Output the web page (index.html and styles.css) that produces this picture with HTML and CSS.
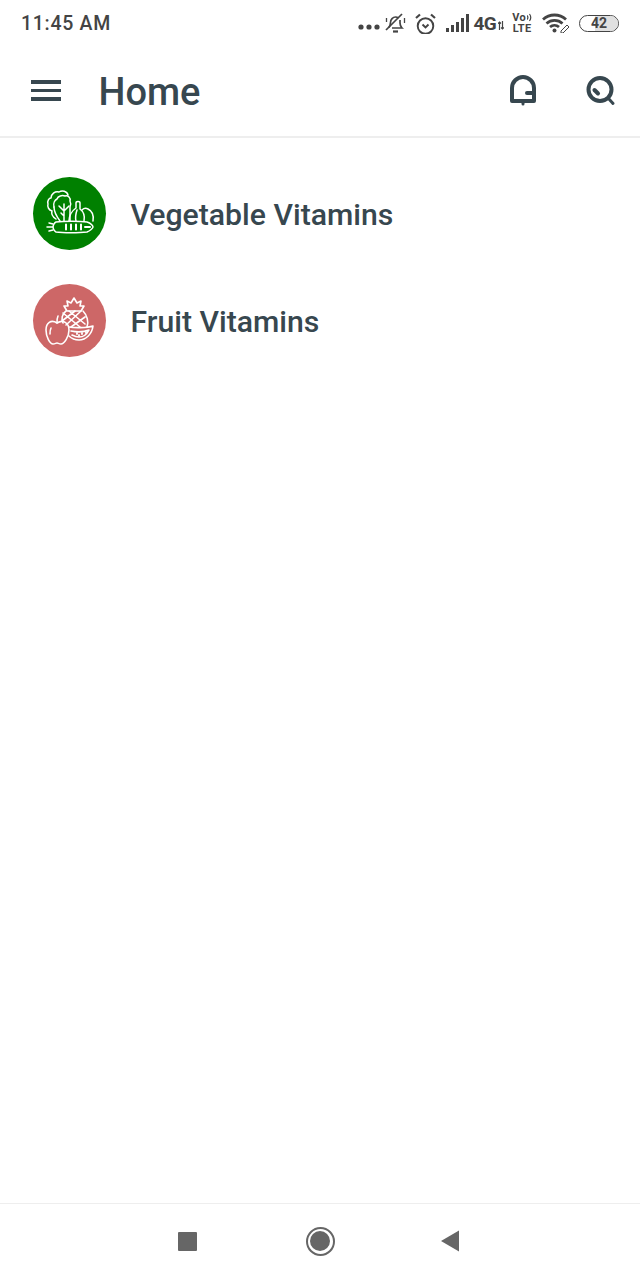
FILE: index.html
```html
<!DOCTYPE html>
<html lang="en">
<head>
<meta charset="utf-8">
<title>Home</title>
<link rel="stylesheet" href="styles.css">
</head>
<body>
<div class="screen">
  <div class="status">
    <span class="time">11:45 AM</span>
    <div class="status-icons">
      <svg class="s-dots" width="22" height="6" viewBox="0 0 22 6"><circle cx="3" cy="3" r="2.6"/><circle cx="11" cy="3" r="2.6"/><circle cx="19" cy="3" r="2.6"/></svg>
      <svg class="s-mute" width="21" height="20" viewBox="0 0 21 20" fill="none" stroke="#444" stroke-width="1.7"><path d="M1 17L17 1"/><path d="M4 14.500c1-2 1.500-3 1.500-5 0-3 2.500-5.500 5-5.500 1 0 2 .3 3 1M15 7v3c0 2 .5 3.500 2 5H7"/><path d="M8 18.500h5" stroke-width="2.200"/><path d="M1.500 5v4M19.500 5v5" stroke-width="1.300"/></svg>
      <svg class="s-alarm" width="21" height="21" viewBox="0 0 21 21" fill="none" stroke="#444" stroke-width="1.900"><circle cx="10.500" cy="13" r="7.800"/><path d="M7.500 11.500l3 3 3-3"/><path d="M1 5l4-3.500M20 5l-4-3.500" stroke-width="2.200"/></svg>
      <svg class="s-signal" width="23" height="18" viewBox="0 0 23 18" fill="#444"><rect x="0" y="14" width="3" height="4"/><rect x="5" y="11" width="3" height="7"/><rect x="10" y="8" width="3" height="10"/><rect x="15" y="4" width="3" height="14"/><rect x="20" y="0" width="3" height="18"/></svg>
      <span class="net">4G</span>
      <svg class="s-arrows" width="6" height="9" viewBox="0 0 6 9" fill="none" stroke="#444" stroke-width="1.200"><path d="M1.500 9V1M0 2.500L1.500 1 3 2.500M4.500 0v8M3 6.500L4.500 8 6 6.500"/></svg>
      <div class="volte">
        <div class="volte-top"><span>Vo</span><svg width="5" height="9" viewBox="0 0 5 9" fill="none" stroke="#444" stroke-width="1.200"><path d="M0 2.500a3 3 0 0 1 0 4M2.500 1a6 6 0 0 1 0 7"/></svg></div>
        <span>LTE</span>
      </div>
      <svg class="s-wifi" width="28" height="20" viewBox="0 0 28 20" fill="none" stroke="#444" stroke-width="2.800"><path d="M1 6.500a17 17 0 0 1 23 0M4.500 10.500a12 12 0 0 1 16 0M8 14a7 7 0 0 1 9 0"/><circle cx="12.500" cy="17.500" r="2" fill="#444" stroke="none"/><path d="M19 18l6-6 2 2-6 6h-2z" stroke-width="1"/></svg>
      <div class="battery"><span class="battery-fill"></span><span class="battery-level">42</span></div>
    </div>
  </div>

  <header class="topbar">
    <div class="menu"><span></span><span></span><span></span></div>
    <h1 class="title">Home</h1>
    <svg class="bell" width="30" height="32" viewBox="0 0 30 32" fill="none" stroke="#37474f" stroke-width="4" stroke-linecap="round" stroke-linejoin="round"><path d="M5 27V14a11 11 0 0 1 22 0v13z"/><path d="M20 19h7"/><path d="M16 28.500v1.500" stroke-width="3"/></svg>
    <svg class="search" width="32" height="32" viewBox="0 0 32 32" fill="none" stroke="#37474f" stroke-width="4" stroke-linecap="round"><circle cx="16" cy="15.500" r="11.500"/><path d="M10.500 16l3.500 3.500"/><path d="M24.500 24.500l4.500 5" stroke-width="3"/></svg>
  </header>

  <main class="list">
    <a class="item">
      <span class="badge badge-veg">
        <svg width="73" height="73" viewBox="0 0 73 73" fill="none" stroke="#fff" stroke-width="1.500" stroke-linecap="round" stroke-linejoin="round">
          <path d="M23 42c-3-2-5-5-4-8-3-1-5-4-4-7-1-3 1-6 3-6 0-4 4-7 8-6 3-2 8-1 9 3"/>
          <path d="M21 30c-1-4 1-7 3-8 1-3 5-4 8-3 3-1 6 2 5 5 1 2 1 4 0 6v14"/>
          <path d="M21 30c0 5 3 10 6 14"/>
          <path d="M31 44V27M31 34l-5-5M31 34l5-5M31 39l-3-3"/>
          <path d="M36 44c0-7 3-10 7-13v-5c0-2 4-2 4 0v6c4 3 5 7 4 12"/>
          <path d="M43 44c-1-4 0-8 1-11"/>
          <path d="M49 33c2-2 4-2 6-1 4 2 6 6 5 12"/>
          <path d="M23 45c8-1 24-1 31 0 4 1 6 4 6 5s-3 4-6 5c-8 1-24 1-31 0-2-1-3-4-3-5s1-4 3-5z"/>
          <path d="M20 50h-6M20 47l-4-1M20 53l-4 1"/>
          <path d="M33 47.500v5M38 47.500v5M43 47.500v5M48 47.500v5M52 50h5" stroke-width="2"/>
        </svg>
      </span>
      <span class="label">Vegetable Vitamins</span>
    </a>
    <a class="item">
      <span class="badge badge-fruit">
        <svg width="73" height="73" viewBox="0 0 73 73" fill="none" stroke="#fff" stroke-width="1.600" stroke-linecap="round" stroke-linejoin="round">
          <path d="M41 14l3 5 4-2-1 5 4 0-3 5H34l-3-5 4 0-1-5 4 2z"/>
          <path d="M33 27c-4 3-5 8-3 12M50 27c4 4 6 11 4 16M30 29l17 14M36 27l16 13M48 27L33 41M42 27L29 37M52 33l-14 10"/>
          <path d="M24 39c-6-4-11 0-11 7 0 7 4 14 7 14 2 0 3-1 4-1s2 1 4 1c3 0 8-7 8-14 0-7-6-11-12-7z"/>
          <path d="M24 39c0-3 0-5 1-7M18 44c-1 2-1 4-1 6"/>
          <path d="M36 43c5 1 18 1 24-1-1 8-7 14-14 14-3 0-7-1-10-4"/>
          <path d="M38 47c5 1 13 1 18-1-2 4-6 7-10 7-3 0-5-1-7-2"/>
          <path d="M44 49v1M49 49v1M46 51v1M53 48v1" stroke-width="1.800"/>
        </svg>
      </span>
      <span class="label">Fruit Vitamins</span>
    </a>
  </main>

  <footer class="navbar">
    <span class="nav-square"></span>
    <span class="nav-home"><span></span></span>
    <svg class="nav-back" width="20" height="22" viewBox="0 0 20 22"><path d="M1 11L19 .5v21z" fill="#666"/></svg>
  </footer>
</div>
</body>
</html>
```

FILE: styles.css
```css
* { box-sizing: border-box; }

body {
  margin: 0;
  background: #fff;
  font-family: Roboto, "Noto Sans", sans-serif;
}

.screen {
  display: flex;
  flex-direction: column;
  height: 1280px;
  width: 640px;
  overflow: hidden;
}

/* system status row */
.status {
  display: flex;
  align-items: center;
  justify-content: space-between;
  height: 46px;
  padding: 0 21px;
  color: #444;
}

.time {
  font-size: 19.500px;
  font-weight: 500;
  letter-spacing: 0.7px;
  color: #444;
}

.status-icons {
  display: flex;
  align-items: center;
  height: 46px;
  fill: #444;
}

.s-dots { margin-top: 8px; }
.s-mute { margin-left: 5px; }
.s-alarm { margin-left: 9px; }
.s-signal { margin-left: 10px; margin-top: -1px; }

.net {
  margin-left: 4px;
  font-size: 19px;
  font-weight: 700;
  letter-spacing: -0.5px;
}

.s-arrows { margin-left: 2px; margin-top: 4px; }

.volte {
  display: flex;
  flex-direction: column;
  align-items: center;
  margin-left: 8px;
  font-size: 11px;
  font-weight: 700;
  letter-spacing: 0.3px;
  line-height: 11px;
}

.volte-top {
  display: flex;
  align-items: center;
  gap: 1px;
}

.s-wifi { margin-left: 10px; }

.battery {
  position: relative;
  display: flex;
  align-items: center;
  justify-content: center;
  width: 40px;
  height: 17px;
  margin-left: 9px;
  border: 1.500px solid #444;
  border-radius: 9px;
  overflow: hidden;
}

.battery-fill {
  position: absolute;
  top: 0;
  right: 0;
  bottom: 0;
  width: 23px;
  background: #e0e0e0;
}

.battery-level {
  position: relative;
  font-size: 14px;
  font-weight: 700;
}

/* app bar */
.topbar {
  display: flex;
  align-items: center;
  height: 92px;
  padding: 0 24px 0 31px;
  border-bottom: 2px solid #eee;
}

.menu {
  display: flex;
  flex-direction: column;
  gap: 5px;
  width: 30px;
  margin-top: -1px;
}

.menu span {
  height: 3.500px;
  background: #37474f;
}

.title {
  flex: 1;
  margin: 0 0 0 37.500px;
  padding-top: 2px;
  font-size: 38px;
  font-weight: 500;
  color: #37474f;
}

.bell { margin-right: 47px; margin-top: -2px; }
.search { margin-top: -2px; }

/* category list */
.list {
  flex: 1;
  display: flex;
  flex-direction: column;
  gap: 33px;
  padding: 38px 0 0 33px;
}

.item {
  display: flex;
  align-items: center;
  gap: 24.500px;
  height: 74px;
}

.badge {
  display: block;
  width: 73px;
  height: 73px;
  border-radius: 50%;
}

.badge svg { display: block; }
.badge-veg { background: #008000; }
.badge-fruit { background: #cd6767; }

.label {
  padding-top: 2px;
  font-size: 30.200px;
  font-weight: 500;
  color: #37474f;
}

/* system navigation */
.navbar {
  display: flex;
  align-items: center;
  justify-content: space-between;
  height: 77px;
  padding: 0 180px 2px 178px;
  border-top: 1px solid #eee;
}

.nav-square {
  width: 19px;
  height: 19px;
  border-radius: 1px;
  background: #666;
}

.nav-home {
  display: flex;
  align-items: center;
  justify-content: center;
  width: 29px;
  height: 29px;
  margin-left: 3px;
  border: 2.500px solid #666;
  border-radius: 50%;
}

.nav-home span {
  width: 20px;
  height: 20px;
  border-radius: 50%;
  background: #666;
}
```
